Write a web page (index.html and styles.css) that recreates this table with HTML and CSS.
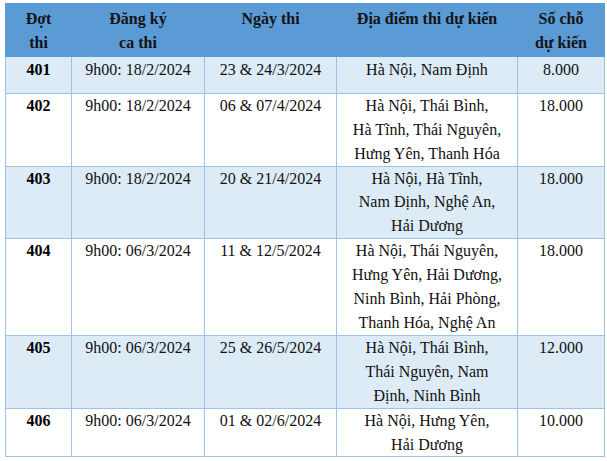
FILE: index.html
```html
<!DOCTYPE html>
<html lang="vi">
<head>
<meta charset="utf-8">
<title>Lịch thi</title>
<link rel="stylesheet" href="styles.css">
</head>
<body>
<table class="schedule">
  <colgroup>
    <col class="c1"><col class="c2"><col class="c3"><col class="c4"><col class="c5">
  </colgroup>
  <thead>
    <tr class="head">
      <th>Đợt<br>thi</th>
      <th>Đăng ký<br>ca thi</th>
      <th>Ngày thi</th>
      <th>Địa điểm thi dự kiến</th>
      <th>Số chỗ<br>dự kiến</th>
    </tr>
  </thead>
  <tbody>
    <tr class="alt r1">
      <td class="id">401</td>
      <td>9h00: 18/2/2024</td>
      <td>23 &amp; 24/3/2024</td>
      <td>Hà Nội, Nam Định</td>
      <td>8.000</td>
    </tr>
    <tr>
      <td class="id">402</td>
      <td>9h00: 18/2/2024</td>
      <td>06 &amp; 07/4/2024</td>
      <td>Hà Nội, Thái Bình,<br>Hà Tĩnh, Thái Nguyên,<br>Hưng Yên, Thanh Hóa</td>
      <td>18.000</td>
    </tr>
    <tr class="alt">
      <td class="id">403</td>
      <td>9h00: 18/2/2024</td>
      <td>20 &amp; 21/4/2024</td>
      <td>Hà Nội, Hà Tĩnh,<br>Nam Định, Nghệ An,<br>Hải Dương</td>
      <td>18.000</td>
    </tr>
    <tr>
      <td class="id">404</td>
      <td>9h00: 06/3/2024</td>
      <td>11 &amp; 12/5/2024</td>
      <td>Hà Nội, Thái Nguyên,<br>Hưng Yên, Hải Dương,<br>Ninh Bình, Hải Phòng,<br>Thanh Hóa, Nghệ An</td>
      <td>18.000</td>
    </tr>
    <tr class="alt">
      <td class="id">405</td>
      <td>9h00: 06/3/2024</td>
      <td>25 &amp; 26/5/2024</td>
      <td>Hà Nội, Thái Bình,<br>Thái Nguyên, Nam<br>Định, Ninh Bình</td>
      <td>12.000</td>
    </tr>
    <tr>
      <td class="id">406</td>
      <td>9h00: 06/3/2024</td>
      <td>01 &amp; 02/6/2024</td>
      <td>Hà Nội, Hưng Yên,<br>Hải Dương</td>
      <td>10.000</td>
    </tr>
  </tbody>
</table>
</body>
</html>
```

FILE: styles.css
```css
html, body {
  margin: 0;
  padding: 0;
  background: #ffffff;
}

.schedule {
  margin: 3px 0 0 5px;
  border-collapse: collapse;
  table-layout: fixed;
  width: 599px;
  font-family: "Liberation Serif", "Times New Roman", serif;
  font-size: 16px;
  line-height: 23.9px;
  color: #111111;
}

.c1 { width: 66px; }
.c2 { width: 133px; }
.c3 { width: 132px; }
.c4 { width: 181px; }
.c5 { width: 87px; }

.schedule th,
.schedule td {
  border: 1px solid #9dc3e6;
  text-align: center;
  vertical-align: top;
  padding: 0;
  white-space: nowrap;
}

.head th {
  background: #5b9bd5;
  border-color: #5b9bd5;
  font-weight: bold;
  color: #141414;
  padding: 3px 0 1px;
  height: 47px;
}

.schedule td {
  background: #ffffff;
}

.schedule .alt td {
  background: #ddebf7;
}

.r1 td {
  height: 35px;
  padding-top: 1px;
}

.schedule td.id {
  font-weight: bold;
  color: #000000;
}
```
